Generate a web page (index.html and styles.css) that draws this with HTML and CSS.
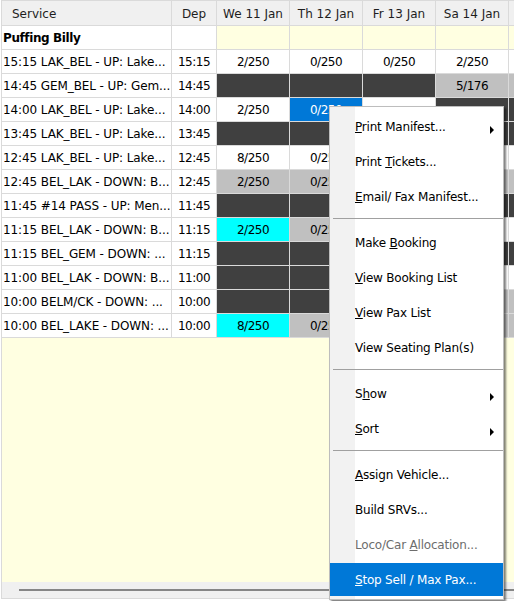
FILE: index.html
```html
<!DOCTYPE html>
<html>
<head>
<meta charset="utf-8">
<title>Schedule</title>
<link rel="stylesheet" href="styles.css">
</head>
<body>
<div class="frame">
  <div class="grid">
    <div class="cell head head--left">Service</div>
    <div class="cell head">Dep</div>
    <div class="cell head">We 11 Jan</div>
    <div class="cell head">Th 12 Jan</div>
    <div class="cell head">Fr 13 Jan</div>
    <div class="cell head">Sa 14 Jan</div>
    <div class="cell head"></div>

    <div class="cell svc group">Puffing Billy</div>
    <div class="cell"></div>
    <div class="cell yellow"></div><div class="cell yellow"></div><div class="cell yellow"></div><div class="cell yellow"></div><div class="cell yellow"></div>

    <div class="cell svc">15:15 LAK_BEL - UP: Lake...</div>
    <div class="cell num">15:15</div>
    <div class="cell num">2/250</div><div class="cell num">0/250</div><div class="cell num">0/250</div><div class="cell num">2/250</div><div class="cell"></div>

    <div class="cell svc">14:45 GEM_BEL - UP: Gem...</div>
    <div class="cell num">14:45</div>
    <div class="cell dark"></div><div class="cell dark"></div><div class="cell dark"></div><div class="cell num grey">5/176</div><div class="cell grey"></div>

    <div class="cell svc">14:00 LAK_BEL - UP: Lake...</div>
    <div class="cell num">14:00</div>
    <div class="cell num">2/250</div><div class="cell num selected">0/250</div><div class="cell"></div><div class="cell dark"></div><div class="cell dark"></div>

    <div class="cell svc">13:45 LAK_BEL - UP: Lake...</div>
    <div class="cell num">13:45</div>
    <div class="cell dark"></div><div class="cell dark"></div><div class="cell dark"></div><div class="cell dark"></div><div class="cell dark"></div>

    <div class="cell svc">12:45 LAK_BEL - UP: Lake...</div>
    <div class="cell num">12:45</div>
    <div class="cell num">8/250</div><div class="cell num">0/250</div><div class="cell"></div><div class="cell"></div><div class="cell"></div>

    <div class="cell svc">12:45 BEL_LAK - DOWN: B...</div>
    <div class="cell num">12:45</div>
    <div class="cell num grey">2/250</div><div class="cell num grey">0/250</div><div class="cell grey"></div><div class="cell grey"></div><div class="cell grey"></div>

    <div class="cell svc">11:45 #14 PASS - UP: Men...</div>
    <div class="cell num">11:45</div>
    <div class="cell dark"></div><div class="cell dark"></div><div class="cell dark"></div><div class="cell dark"></div><div class="cell dark"></div>

    <div class="cell svc">11:15 BEL_LAK - DOWN: B...</div>
    <div class="cell num">11:15</div>
    <div class="cell num cyan">2/250</div><div class="cell num grey">0/250</div><div class="cell grey"></div><div class="cell"></div><div class="cell"></div>

    <div class="cell svc">11:15 BEL_GEM - DOWN: ...</div>
    <div class="cell num">11:15</div>
    <div class="cell dark"></div><div class="cell dark"></div><div class="cell dark"></div><div class="cell dark"></div><div class="cell dark"></div>

    <div class="cell svc">11:00 BEL_LAK - DOWN: B...</div>
    <div class="cell num">11:00</div>
    <div class="cell dark"></div><div class="cell dark"></div><div class="cell dark"></div><div class="cell"></div><div class="cell"></div>

    <div class="cell svc">10:00 BELM/CK - DOWN: ...</div>
    <div class="cell num">10:00</div>
    <div class="cell dark"></div><div class="cell dark"></div><div class="cell dark"></div><div class="cell grey"></div><div class="cell grey"></div>

    <div class="cell svc">10:00 BEL_LAKE - DOWN: ...</div>
    <div class="cell num">10:00</div>
    <div class="cell num cyan">8/250</div><div class="cell num grey">0/250</div><div class="cell grey"></div><div class="cell grey"></div><div class="cell grey"></div>
  </div>
  <div class="filler"></div>
  <div class="hscroll"><div class="hscroll__thumb"></div></div>
</div>

<div class="menu">
  <div class="menu__item"><span><u>P</u>rint Manifest...</span><i class="menu__arrow"></i></div>
  <div class="menu__item"><span>Print <u>T</u>ickets...</span></div>
  <div class="menu__item"><span><u>E</u>mail/ Fax Manifest...</span></div>
  <div class="menu__sep"></div>
  <div class="menu__item"><span>Make <u>B</u>ooking</span></div>
  <div class="menu__item"><span><u>V</u>iew Booking List</span></div>
  <div class="menu__item"><span><u>V</u>iew Pax List</span></div>
  <div class="menu__item"><span>View Seating Plan(s)</span></div>
  <div class="menu__sep"></div>
  <div class="menu__item"><span>S<u>h</u>ow</span><i class="menu__arrow"></i></div>
  <div class="menu__item"><span><u>S</u>ort</span><i class="menu__arrow"></i></div>
  <div class="menu__sep"></div>
  <div class="menu__item"><span><u>A</u>ssign Vehicle...</span></div>
  <div class="menu__item"><span>Build SRVs...</span></div>
  <div class="menu__item menu__item--disabled"><span>Loco/Car <u>A</u>llocation...</span></div>
  <div class="menu__item menu__item--active"><span><u>S</u>top Sell / Max Pax...</span></div>
</div>
</body>
</html>
```

FILE: styles.css
```css
html, body {
  margin: 0;
  padding: 0;
  overflow: hidden;
  background: #fff;
}

body {
  font-family: "DejaVu Sans", Verdana, sans-serif;
  font-size: 12px;
  color: #000;
}

.frame {
  margin-left: 1px;
  width: 513px;
  height: 599px;
  border: 1px solid #dadada;
  border-right: 0;
  box-sizing: border-box;
  display: flex;
  flex-direction: column;
  overflow: hidden;
}

.grid {
  display: grid;
  grid-template-columns: 170px 45px repeat(5, 73px);
  grid-template-rows: 25px;
  grid-auto-rows: 24px;
}

.cell {
  box-sizing: border-box;
  border-right: 1px solid #dadada;
  border-bottom: 1px solid #dadada;
  display: flex;
  align-items: center;
  justify-content: center;
  white-space: nowrap;
  overflow: hidden;
  padding-top: 1px;
}

.head {
  background: #f0f0f0;
  color: #1e1e1e;
}

.head--left {
  justify-content: flex-start;
  padding-left: 10px;
}

.svc {
  justify-content: flex-start;
  padding-left: 1px;
  letter-spacing: -0.1px;
}

.group {
  font-weight: bold;
  letter-spacing: -0.4px;
}

.num {
  letter-spacing: -0.5px;
}

.yellow { background: #ffffe1; }
.dark { background: #404040; }
.grey { background: #c0c0c0; }
.cyan { background: #00ffff; }
.selected { background: #0078d7; color: #fff; }

.filler {
  flex: 1;
  background: #ffffe1;
}

.hscroll {
  height: 16px;
  background: #f0f0f0;
  padding-top: 7px;
  box-sizing: border-box;
}

.hscroll__thumb {
  height: 2px;
  margin-left: 17px;
  background: #868686;
}

.menu {
  position: absolute;
  left: 329px;
  top: 106px;
  width: 175px;
  box-sizing: border-box;
  border: 1px solid #bdbdbd;
  padding: 2px 0;
  background: linear-gradient(to right, #f2f2f2 0, #f2f2f2 25px, #fff 25px);
  box-shadow: 2px 2px 2px rgba(0, 0, 0, 0.5);
  display: flex;
  flex-direction: column;
  letter-spacing: -0.2px;
}

.menu__item {
  height: 33px;
  margin: 1px 0;
  display: flex;
  align-items: center;
  padding-left: 25px;
  color: #000;
}

.menu__item--disabled {
  color: #6d6d6d;
}

.menu__item--active {
  background: #0078d7;
  color: #fff;
}

.menu__arrow {
  width: 0;
  height: 0;
  margin-left: auto;
  margin-right: 9px;
  margin-top: 7px;
  border-left: 4px solid #000;
  border-top: 4px solid transparent;
  border-bottom: 4px solid transparent;
}

.menu__sep {
  height: 1px;
  margin: 4px 0 6px 3px;
  background: #a0a0a0;
}
```
